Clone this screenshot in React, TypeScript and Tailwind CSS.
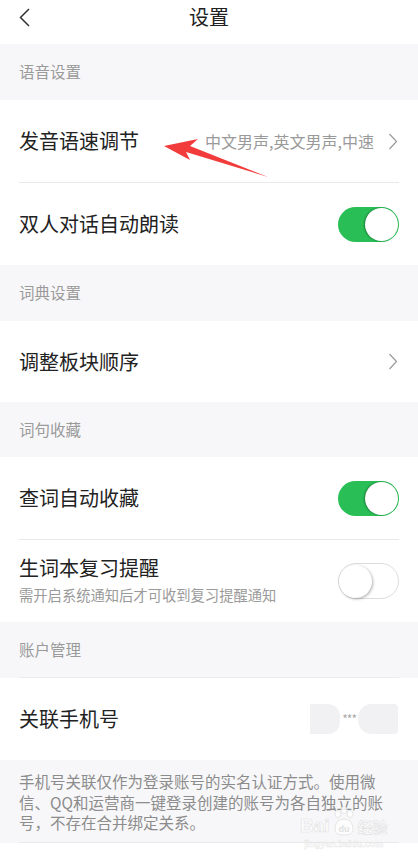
import React from "react";

const Chevron = () => (
  <svg width="10" height="17" viewBox="0 0 10 17" className="shrink-0">
    <path d="M1.5 1 L8.5 8.5 L1.5 16" fill="none" stroke="#9a9a9a" strokeWidth="1.2" />
  </svg>
);

const Toggle = ({ on }: { on: boolean }) =>
  on ? (
    <div className="w-[61px] h-[35px] rounded-full bg-[#29bf56] flex items-center justify-end pr-[1px] shrink-0">
      <div className="w-[33px] h-[33px] rounded-full bg-white shadow-[-1px_0_2px_rgba(0,0,0,0.35)]" />
    </div>
  ) : (
    <div className="w-[61px] h-[36px] rounded-full bg-white border border-[#dcdcdc] flex items-center justify-start shrink-0">
      <div className="w-[33px] h-[33px] rounded-full bg-white shadow-[1px_1px_3px_rgba(0,0,0,0.3)]" />
    </div>
  );

const Section = ({ title, h = "h-[56px]" }: { title: string; h?: string }) => (
  <div className={`${h} bg-[#f7f7f9] px-[19px] flex items-center text-[15.5px] text-[#9a9a9a]`}>{title}</div>
);

const Divider = () => <div className="mx-[19px] h-px bg-[#e9e9eb]" />;

export default function App() {
  return (
    <div className="w-[418px] h-[864px] bg-white relative overflow-hidden font-['Noto_Sans_CJK_SC','Noto_Sans',sans-serif] text-[#222]">
      {/* header */}
      <div className="h-[44px]">
        <div className="h-[33px] flex items-center justify-between">
          <div className="w-[60px] pl-[19px] flex items-center">
            <svg width="12" height="20" viewBox="0 0 12 20">
              <path d="M10 2 L1.5 10.5 L10 19" fill="none" stroke="#333" strokeWidth="1.5" />
            </svg>
          </div>
          <div className="text-[20px] leading-[24px] text-[#222] mt-[1px]">设置</div>
          <div className="w-[60px]" />
        </div>
      </div>

      <Section title="语音设置" />
      <div className="h-[82px] px-[19px] flex items-center justify-between">
        <span className="text-[20px]">发音语速调节</span>
        <div className="flex items-center gap-[14px] pr-[1px]">
          <span className="text-[16px] text-[#9a9a9a]">中文男声,英文男声,中速</span>
          <Chevron />
        </div>
      </div>
      <Divider />
      <div className="h-[82px] px-[19px] flex items-center justify-between">
        <span className="text-[20px]">双人对话自动朗读</span>
        <Toggle on />
      </div>

      <Section title="词典设置" />
      <div className="h-[81px] px-[19px] flex items-center justify-between">
        <span className="text-[20px]">调整板块顺序</span>
        <div className="pr-[1px]">
          <Chevron />
        </div>
      </div>

      <Section title="词句收藏" h="h-[55px]" />
      <div className="h-[82px] px-[19px] flex items-center justify-between">
        <span className="text-[20px]">查词自动收藏</span>
        <Toggle on />
      </div>
      <Divider />
      <div className="h-[82px] px-[19px] flex items-center justify-between">
        <div className="flex flex-col -mt-[3px]">
          <span className="text-[20px] leading-[28px]">生词本复习提醒</span>
          <span className="text-[14.3px] leading-[20px] text-[#9a9a9a] mt-[3px]">需开启系统通知后才可收到复习提醒通知</span>
        </div>
        <Toggle on={false} />
      </div>

      <div className="bg-[#f7f7f9]">
        <div className="h-[55px] px-[19px] flex items-center text-[15.5px] text-[#9a9a9a]">账户管理</div>
        <div className="mx-[19px] h-px bg-[#ececee]" />
      </div>
      <div className="h-[82px] px-[19px] flex items-center justify-between">
        <span className="text-[20px]">关联手机号</span>
        <div className="flex items-center pr-[1px]">
          <div className="w-[30px] h-[30px] bg-[#f1f1f3] rounded-r-[12px]" />
          <span className="text-[12px] text-[#aaa] px-[2px] tracking-[-1px]">***</span>
          <div className="w-[40px] h-[30px] bg-[#f1f1f3] rounded-l-[14px] rounded-r-[4px]" />
        </div>
      </div>
      <div className="bg-[#f7f7f9] h-[83px] flex flex-col">
        <div className="flex-1 px-[19px] pt-[11px] text-[15.5px] leading-[20.5px] text-[#8c8c8c]">
          <div className="whitespace-nowrap">手机号关联仅作为登录账号的实名认证方式。使用微</div>
          <div className="whitespace-nowrap">信、QQ和运营商一键登录创建的账号为各自独立的账</div>
          <div className="whitespace-nowrap">号，不存在合并绑定关系。</div>
        </div>
        <div className="mx-[19px] h-px bg-[#e9e9eb]" />
      </div>

      {/* red annotation arrow */}
      <svg className="absolute left-0 top-0 pointer-events-none" width="418" height="864" viewBox="0 0 418 864">
        <path d="M164 146 L198 139 L190 146 L268 177 L186 152 L190 160 Z" fill="#f23b3b" />
      </svg>

      {/* watermark */}
      <div className="absolute left-[300px] top-[806px] flex flex-col items-center pointer-events-none opacity-80">
        <div className="flex items-end gap-[2px]">
          <span className="text-[19px] leading-[20px] font-bold text-white [-webkit-text-stroke:0.6px_#dcdcdc] font-['Liberation_Sans',sans-serif]">Bai</span>
          <svg width="24" height="30" viewBox="0 0 24 30">
            <g fill="white" stroke="#dcdcdc" strokeWidth="0.8">
              <ellipse cx="6" cy="8" rx="3" ry="3.5" />
              <ellipse cx="12" cy="4" rx="3" ry="3.5" />
              <ellipse cx="18" cy="8" rx="3" ry="3.5" />
              <path d="M3 24 Q3 13 12 13 Q21 13 21 24 Q21 29 12 29 Q3 29 3 24 Z" />
            </g>
            <text x="12" y="26" textAnchor="middle" fontSize="9" fontWeight="bold" fill="#dcdcdc" fontFamily="Liberation Sans, sans-serif">du</text>
          </svg>
          <span className="text-[15px] leading-[18px] font-bold text-white [-webkit-text-stroke:0.6px_#dcdcdc]">经验</span>
        </div>
        <span className="text-[9px] leading-[11px] font-bold text-white [-webkit-text-stroke:0.4px_#dcdcdc] font-['Liberation_Sans',sans-serif] mt-[3px]">jingyan.baidu.com</span>
      </div>
    </div>
  );
}
